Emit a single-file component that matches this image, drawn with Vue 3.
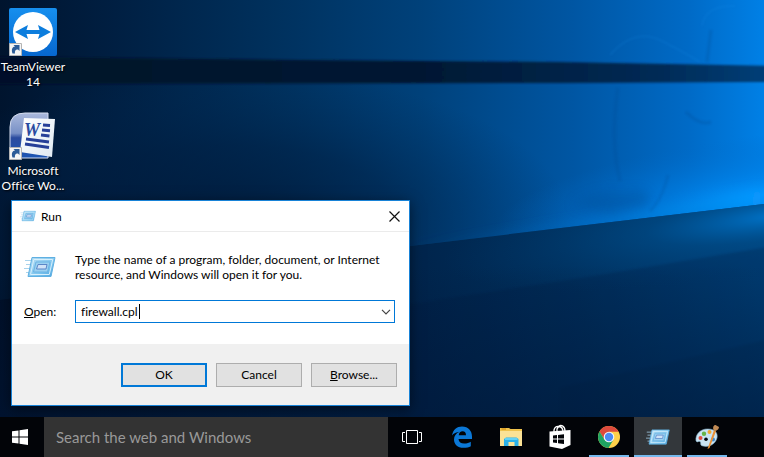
<script setup>
import { ref } from 'vue'

const command = ref('firewall.cpl')
const query = ref('')
</script>

<template>
  <div class="screen">
    <svg class="wallpaper" viewBox="0 0 764 417" preserveAspectRatio="none" aria-hidden="true">
      <defs>
        <linearGradient id="sky" x1="0" x2="1" y1="0" y2="0">
          <stop offset="0" stop-color="#00142e" />
          <stop offset=".15" stop-color="#001f42" />
          <stop offset=".35" stop-color="#00305c" />
          <stop offset=".55" stop-color="#00417a" />
          <stop offset=".75" stop-color="#0056a3" />
          <stop offset=".9" stop-color="#006ac6" />
          <stop offset="1" stop-color="#0080e6" />
        </linearGradient>
        <radialGradient id="skyShade" gradientUnits="userSpaceOnUse" cx="0" cy="0" r="1" gradientTransform="translate(230 220) scale(340 150)">
          <stop offset="0" stop-color="#001938" stop-opacity=".8" />
          <stop offset=".5" stop-color="#001d40" stop-opacity=".5" />
          <stop offset="1" stop-color="#002a55" stop-opacity="0" />
        </radialGradient>
        <radialGradient id="glow" gradientUnits="userSpaceOnUse" cx="0" cy="0" r="1" gradientTransform="translate(764 195) rotate(-7) scale(270 60)">
          <stop offset="0" stop-color="#0295ff" />
          <stop offset=".4" stop-color="#0080e6" stop-opacity=".6" />
          <stop offset="1" stop-color="#006ac8" stop-opacity="0" />
        </radialGradient>
        <linearGradient id="band" x1="0" x2="1" y1="0" y2="0">
          <stop offset="0" stop-color="#001129" />
          <stop offset=".55" stop-color="#001833" />
          <stop offset=".85" stop-color="#002a55" />
          <stop offset="1" stop-color="#00407a" />
        </linearGradient>
        <linearGradient id="floor" gradientUnits="userSpaceOnUse" x1="0" x2="764" y1="380" y2="270">
          <stop offset="0" stop-color="#000f27" />
          <stop offset=".5" stop-color="#002147" />
          <stop offset=".75" stop-color="#00305d" />
          <stop offset="1" stop-color="#00437c" />
        </linearGradient>
        <linearGradient id="floorShade" x1="0" x2="0" y1="0" y2="1">
          <stop offset=".3" stop-color="#001737" stop-opacity="0" />
          <stop offset="1" stop-color="#001737" stop-opacity=".5" />
        </linearGradient>
        <radialGradient id="floorGlow" gradientUnits="userSpaceOnUse" cx="0" cy="0" r="1" gradientTransform="translate(780 215) rotate(-8) scale(340 60)">
          <stop offset="0" stop-color="#0074ca" />
          <stop offset=".4" stop-color="#00508f" stop-opacity=".5" />
          <stop offset="1" stop-color="#003b70" stop-opacity="0" />
        </radialGradient>
        <linearGradient id="edge" x1="0" x2="1" y1="0" y2="0">
          <stop offset="0" stop-color="#00569f" stop-opacity=".4" />
          <stop offset=".5" stop-color="#0078d4" stop-opacity=".6" />
          <stop offset="1" stop-color="#0a9bff" stop-opacity=".7" />
        </linearGradient>
        <filter id="soft1" x="-5%" y="-20%" width="110%" height="140%"><feGaussianBlur stdDeviation="1" /></filter>
        <filter id="soft5" x="-30%" y="-60%" width="160%" height="220%"><feGaussianBlur stdDeviation="6" /></filter>
        <clipPath id="above"><path d="M0 0H764V204L410 246L0 300Z" /></clipPath>
        <clipPath id="below"><path d="M0 300L410 246L764 204V417H0Z" /></clipPath>
      </defs>
      <rect width="764" height="417" fill="url(#sky)" />
      <g clip-path="url(#above)">
        <rect width="764" height="417" fill="url(#skyShade)" />
        <rect width="764" height="417" fill="url(#glow)" />
        <path d="M400 250L764 207V190L600 218Z" fill="url(#edge)" filter="url(#soft5)" />
        <path d="M572 205Q595 188 625 192Q655 185 648 206L610 214Z" fill="#004a8f" opacity=".35" filter="url(#soft5)" />
        <g fill="none" stroke="#2094ed" opacity=".14" filter="url(#soft1)">
          <path d="M702 26Q705 5 735 6M610 55Q635 27 662 41T700 62" stroke-width="2" />
          <path d="M618 88Q610 140 620 181M668 175Q662 200 650 211" stroke="#003f82" stroke-width="3" />
          <path d="M686 112Q700 126 711 122M711 30L707 62" stroke="#00356e" stroke-width="3" />
        </g>
      </g>
      <path d="M-10 57L300 60L560 62L774 66V82L560 83L-10 84Z" fill="url(#band)" filter="url(#soft1)" />
      <g clip-path="url(#below)">
        <rect width="764" height="417" fill="url(#floor)" />
        <rect width="764" height="417" fill="url(#floorGlow)" />
        <path d="M400 306L600 275L774 246V427H400Z" fill="#00173a" opacity=".2" filter="url(#soft1)" />
        <path d="M560 388L774 338V427H560Z" fill="#00132e" opacity=".12" filter="url(#soft1)" />
        <rect y="200" width="764" height="217" fill="url(#floorShade)" />
      </g>
    </svg>

    <main class="desktop">
      <a class="shortcut" href="#teamviewer">
        <svg class="shortcut-icon" viewBox="0 0 48 48" aria-hidden="true">
          <defs>
            <linearGradient id="tv" x1="0" x2="0" y1="0" y2="1">
              <stop offset="0" stop-color="#168fee" />
              <stop offset="1" stop-color="#0667cf" />
            </linearGradient>
          </defs>
          <rect width="48" height="48" rx="2" fill="url(#tv)" />
          <circle cx="24" cy="24" r="20" fill="#fff" />
          <path d="M6 24L19 17L17.500 22H30.500L29 17L42 24L29 31L30.500 26H17.500L19 31Z" fill="#0c7ddd" />
          <path d="M.5 35.500H12.500V47.500H.5Z" fill="#f5f5f5" stroke="#b4b4b4" />
          <path d="M3.500 45.500C2 41.500 3.500 38.500 6 38.500L4.500 37H10.500V43L9 41.500C6.500 41 5.500 43 6 45.500Z" fill="#2c5c98" />
        </svg>
        <span class="shortcut-name">TeamViewer 14</span>
      </a>
      <a class="shortcut" href="#word">
        <svg class="shortcut-icon" viewBox="0 0 48 48" aria-hidden="true">
          <defs>
            <linearGradient id="wordBack" x1="0" x2="0" y1="0" y2="1">
              <stop offset="0" stop-color="#aab9dc" />
              <stop offset=".45" stop-color="#7890c6" />
              <stop offset=".55" stop-color="#2b4b9f" />
              <stop offset="1" stop-color="#1c56b4" />
            </linearGradient>
            <linearGradient id="wordPage" x1="0" x2="1" y1="0" y2="1">
              <stop offset="0" stop-color="#fff" />
              <stop offset="1" stop-color="#dfeaf2" />
            </linearGradient>
          </defs>
          <path d="M1 46V15Q1 1 16 1H39V46Z" fill="url(#wordBack)" stroke="#d6def0" />
          <path d="M15 6L46 7L43 45L11 40Z" fill="url(#wordPage)" />
          <text x="15" y="24" class="word-letter">W</text>
          <path d="M34 13L41 13.500M33 18L41 18.700M32 23L40.500 24M17 27L40 30M16 32L40 35.500" fill="none" stroke="#263f98" stroke-width="3" />
          <path d="M.5 35.500H12.500V47.500H.5Z" fill="#f5f5f5" stroke="#b4b4b4" />
          <path d="M3.500 45.500C2 41.500 3.500 38.500 6 38.500L4.500 37H10.500V43L9 41.500C6.500 41 5.500 43 6 45.500Z" fill="#2c5c98" />
        </svg>
        <span class="shortcut-name">Microsoft Office Wo...</span>
      </a>
    </main>

    <form class="dialog" role="dialog" aria-labelledby="run-title" @submit.prevent>
      <svg class="defs" aria-hidden="true">
        <defs>
          <linearGradient id="runFill" x1="0" x2="1" y1="0" y2="1">
            <stop offset="0" stop-color="#b9def3" />
            <stop offset=".6" stop-color="#7fc6ef" />
            <stop offset="1" stop-color="#4aa3de" />
          </linearGradient>
          <symbol id="run-icon" viewBox="0 0 32 24">
            <path d="M1 5.500H10M2 9.500H9M0 13.500H8M2 17.500H6" stroke="#a9d3ec" stroke-width="1" />
            <path d="M8 2.500H31L27 21.500H4Z" fill="url(#runFill)" stroke="#5fb0e2" />
            <path d="M9.800 4.500H28.700L25.300 19.500H6.500Z" fill="none" stroke="#d8f0fc" />
            <path d="M12 7H26L23.500 17H9.500Z" fill="#9bd0f0" stroke="#6bb3e3" />
            <path d="M14 9.500H23L22 14H12.500Z" fill="#cfe2f7" stroke="#5a86c8" />
          </symbol>
        </defs>
      </svg>
      <header class="titlebar">
        <svg class="title-icon" viewBox="0 0 32 24" aria-hidden="true"><use href="#run-icon" /></svg>
        <h1 id="run-title" class="title">Run</h1>
        <button class="close" type="button" aria-label="Close">
          <svg class="close-mark" viewBox="0 0 11 11" aria-hidden="true"><path d="M.5 .5L10.500 10.500M10.500 .5L.5 10.500" stroke="#111" stroke-width="1.200" /></svg>
        </button>
      </header>
      <div class="content">
        <svg class="run-picture" viewBox="0 0 32 24" aria-hidden="true"><use href="#run-icon" /></svg>
        <p class="message">Type the name of a program, folder, document, or Internet resource, and Windows will open it for you.</p>
        <label class="open-label" for="command"><u>O</u>pen:</label>
        <div class="combo">
          <input id="command" v-model="command" class="command" type="text" autocomplete="off" spellcheck="false">
          <span class="caret"></span>
          <button class="drop" type="button" aria-label="Show history">
            <svg class="drop-mark" viewBox="0 0 10 6" aria-hidden="true"><path d="M1 .8L5 4.800L9 .8" fill="none" stroke="#444" stroke-width="1.200" /></svg>
          </button>
        </div>
      </div>
      <footer class="actions">
        <button class="action primary" type="submit">OK</button>
        <button class="action" type="button">Cancel</button>
        <button class="action" type="button"><u>B</u>rowse...</button>
      </footer>
    </form>

    <nav class="taskbar">
      <button class="start" type="button" aria-label="Start">
        <svg class="start-icon" viewBox="0 0 16 16" aria-hidden="true">
          <path d="M0 2.300L6.500 1.400V7.500H0ZM7.500 1.200L16 0V7.500H7.500ZM0 8.500H6.500V14.600L0 13.700ZM7.500 8.500H16V16L7.500 14.800Z" fill="#fff" />
        </svg>
      </button>
      <input v-model="query" class="search" type="text" aria-label="Search" placeholder="Search the web and Windows">
      <button class="task" type="button" aria-label="Task View">
        <svg class="task-icon" viewBox="0 0 24 24" fill="none" stroke="#fff" aria-hidden="true">
          <path d="M6.500 5.500H17.500V18.500H6.500ZM5 7.500H2.500V16.500H5M19 7.500H21.500V16.500H19" />
        </svg>
      </button>
      <div class="apps">
        <button class="task" type="button" aria-label="Edge">
          <svg class="task-icon" viewBox="0 0 24 24" aria-hidden="true">
            <path d="M2 10.500C3 4.500 7 1.500 12 1.500C18.500 1.500 22 6 22 11.500V14H8.500C8.700 17 11 18.500 14.200 18.500C17 18.500 19 17.800 20.800 16.700V21.200C19 22.200 16.500 22.800 13.500 22.800C7.500 22.800 4 19.400 4 14.500C4 11 6 8.200 9.500 6.700C6.200 7 3.600 8.300 2 10.500ZM8.700 10.200H16C16 7.700 14.800 6.200 12.600 6.200C10.500 6.200 9 7.800 8.700 10.200Z" fill="#0b78d7" />
          </svg>
        </button>
        <button class="task" type="button" aria-label="File Explorer">
          <svg class="task-icon" viewBox="0 0 24 24" aria-hidden="true">
            <path d="M1 3H10L11.500 4H23V21H1Z" fill="#efc34d" />
            <path d="M1 6H23V21H1Z" fill="#fbe296" />
            <path d="M2.500 4H7" stroke="#d99a1f" stroke-width="1.500" />
            <path d="M5 21V14L7 12.500H17.500L19.500 14V21H15.500V17H9.500V21Z" fill="#2cb1e8" />
            <path d="M6 14H18.500" stroke="#61d2f7" stroke-width="2" />
          </svg>
        </button>
        <button class="task" type="button" aria-label="Store">
          <svg class="task-icon store" viewBox="0 0 24 24" aria-hidden="true">
            <path d="M1.500 6.500L22.500 5V20L14 24L1.500 21.500Z" fill="#fff" />
            <path d="M6 8V5Q7 1 11 1.500T15 7M9 7V4Q11 -.5 14.500 .8Q17 2 17 6" fill="none" stroke="#fff" stroke-width="1.300" />
            <path d="M5 10.500L9 10V13.500H5ZM10 9.900L16 9.200V13.500H10ZM5 14.500H9V18L5 17.600ZM10 14.500H16V19L10 18.200Z" fill="#020408" />
          </svg>
        </button>
        <button class="task running" type="button" aria-label="Chrome">
          <svg class="task-icon" viewBox="0 0 24 24" aria-hidden="true">
            <circle cx="12" cy="12" r="11" fill="#ffd14a" />
            <path d="M2.500 6.500A11 11 0 0 1 21.600 6.700H12L7.400 14.600Z" fill="#dc4a3d" />
            <path d="M2.500 6.500A11 11 0 0 0 11.500 23L16.600 14.600L12 17.300L7.400 14.600Z" fill="#1ea362" />
            <circle cx="12" cy="12" r="5.300" fill="#f3f6fc" />
            <circle cx="12" cy="12" r="4.200" fill="#4b8bf5" />
          </svg>
        </button>
        <button class="task running active" type="button" aria-label="Run">
          <svg class="task-icon" viewBox="0 0 32 24" aria-hidden="true"><use href="#run-icon" /></svg>
        </button>
        <button class="task running" type="button" aria-label="Paint">
          <svg class="task-icon" viewBox="0 0 24 24" aria-hidden="true">
            <path d="M1 16C0 9 6 3.500 13 4C20 4 23 8 22 13C20 20 13 22.500 8 21C4 20.500 7 17 4.500 16.500C3 16 2.500 18 1 16Z" fill="#c9e4f3" stroke="#81abc5" stroke-width=".6" />
            <circle cx="5.500" cy="13" r="2" fill="#e04d3f" />
            <circle cx="9" cy="8.700" r="2.200" fill="#67b447" />
            <circle cx="14.500" cy="7" r="2" fill="#f1a62e" />
            <circle cx="11" cy="14.300" r="1.800" fill="#05080e" />
            <circle cx="18" cy="14.500" r="2" fill="#3c8ad0" />
            <path d="M19 5L21 6L14.500 23L12.500 24Z" fill="#e99035" />
            <path d="M18.500 5C17.500 2.500 18.500 0 20.500 0L24 2C24 4 22.500 5 20.700 6Z" fill="#bf8a55" />
          </svg>
        </button>
      </div>
    </nav>
  </div>
</template>

<style>
body {
  margin: 0;
}
</style>

<style scoped>
.screen {
  position: relative;
  display: flex;
  flex-direction: column;
  min-height: 100vh;
  overflow: hidden;
  background: #00142e;
  font-family: Lato, "Open Sans", sans-serif;
  font-size: 12px;
  font-variant-ligatures: none;
  line-height: 15px;
}

.screen * {
  box-sizing: border-box;
}

button,
input {
  margin: 0;
  padding: 0;
  border: 0;
  border-radius: 0;
  outline: 0;
  background: none;
  color: inherit;
  font: inherit;
  font-variant-ligatures: none;
}

svg {
  display: block;
  flex: none;
}

.wallpaper {
  position: absolute;
  top: 0;
  left: 0;
  width: 100%;
  height: calc(100% - 40px);
}

.defs {
  position: absolute;
  width: 0;
  height: 0;
}

.desktop {
  position: relative;
  display: flex;
  flex: 1;
  flex-direction: column;
  align-items: flex-start;
  gap: 23px;
  padding-top: 8px;
}

.shortcut {
  display: flex;
  flex-direction: column;
  align-items: center;
  gap: 3px;
  width: 66px;
  color: #fff;
  text-align: center;
  text-decoration: none;
  text-shadow: 1px 1px 2px #000;
}

.shortcut-icon {
  width: 48px;
  height: 48px;
}

.word-letter {
  fill: #2a4aa0;
  font: italic bold 18px "Liberation Serif", serif;
  text-shadow: none;
}

.dialog {
  position: absolute;
  top: 200px;
  left: 11px;
  width: 399px;
  max-width: calc(100% - 22px);
  border: 1px solid #1883d7;
  background: #fff;
  box-shadow: 0 3px 12px rgba(0, 0, 0, 0.5);
  color: #000;
}

.titlebar {
  display: flex;
  align-items: center;
  gap: 5px;
  height: 31px;
  padding-left: 8px;
  border-bottom: 1px solid #ebebeb;
}

.title-icon {
  width: 16px;
  height: 12px;
}

.title {
  flex: 1;
  margin: 0;
  font-size: 12px;
  font-weight: 400;
}

.close {
  display: grid;
  place-items: center;
  width: 30px;
  height: 28px;
}

.close-mark {
  width: 11px;
  height: 11px;
}

.content {
  display: grid;
  grid-template-columns: 51px 1fr;
  align-items: center;
  row-gap: 18px;
  padding: 20px 14px 21px 12px;
}

.run-picture {
  width: 32px;
  height: 24px;
}

.message {
  margin: 0;
}

.combo {
  position: relative;
  display: flex;
  height: 23px;
  border: 1px solid #0078d7;
}

.command {
  flex: 1;
  min-width: 0;
  padding-left: 5px;
}

.caret {
  position: absolute;
  top: 3px;
  left: 63px;
  width: 1px;
  height: 15px;
  background: #000;
}

.drop {
  display: grid;
  place-items: center;
  width: 17px;
}

.drop-mark {
  width: 10px;
  height: 6px;
}

.actions {
  display: flex;
  justify-content: flex-end;
  gap: 9px;
  padding: 19px 12px 18px;
  background: #f0f0f0;
}

.action {
  width: 86px;
  height: 24px;
  padding-bottom: 2px;
  border: 1px solid #adadad;
  background: #e1e1e1;
}

.primary {
  border: 2px solid #0078d7;
}

.taskbar {
  position: relative;
  display: flex;
  height: 40px;
  background: #020408;
  color: #fff;
}

.start {
  display: grid;
  place-items: center;
  width: 44px;
  padding-right: 4px;
}

.start-icon {
  width: 16px;
  height: 16px;
}

.search {
  width: 45%;
  padding: 0 12px;
  background: #333;
  font-size: 15px;
}

.search::placeholder {
  color: #999;
  opacity: 1;
}

.apps {
  display: flex;
  gap: 1px;
  margin-left: 2px;
}

.task {
  position: relative;
  display: grid;
  place-items: center;
  width: 48px;
  height: 40px;
}

.task-icon {
  width: 24px;
  height: 24px;
}

.store {
  overflow: visible;
}

.running::after {
  position: absolute;
  right: 4px;
  bottom: 0;
  left: 4px;
  height: 2px;
  background: #76b9ed;
  content: "";
}

.active {
  background: #33373b;
}

.active::after {
  right: 0;
  left: 0;
}
</style>
